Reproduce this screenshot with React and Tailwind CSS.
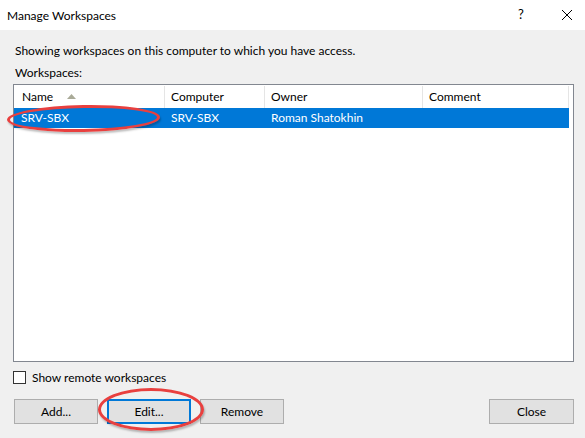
import React from "react";

export default function App() {
  const font = { fontFamily: 'Lato, "Noto Sans", sans-serif' };
  return (
    <div className="relative w-[585px] h-[438px] flex flex-col bg-[#f0f0f0] text-[12px] text-black overflow-hidden" style={font}>
      {/* title bar */}
      <div className="h-[30px] bg-white flex items-center pl-[7px] shrink-0">
        <span className="text-[12px] leading-none mt-[1px]">Manage Workspaces</span>
        <div className="flex-1" />
        <span className="w-[12px] text-center mr-[34px] text-[13px]">?</span>
        <svg width="12" height="12" viewBox="0 0 12 12" className="mr-[12px]">
          <path d="M1 1 L11 11 M11 1 L1 11" stroke="#000" strokeWidth="1" fill="none" />
        </svg>
      </div>

      {/* body */}
      <div className="flex-1 flex flex-col pl-[13px] pr-[11px] pt-[13px]">
        <div className="h-[16px] leading-[16px] pl-[2px]">Showing workspaces on this computer to which you have access.</div>
        <div className="h-[16px] leading-[16px] pl-[2px] mt-[6px]">Workspaces:</div>

        {/* list */}
        <div className="mt-[3px] h-[278px] border border-[#828790] bg-white pr-[4px]">
          <div className="flex h-[23px] pt-[1px]">
            <div className="w-[151px] border-r border-[#e5e5e5] flex items-center pl-[8px]">
              <span>Name</span>
              <svg width="9" height="5" viewBox="0 0 9 5" className="ml-[14px] mb-[1px]">
                <path d="M0 5 L4.5 0 L9 5 Z" fill="#a9aa98" />
              </svg>
            </div>
            <div className="w-[100px] border-r border-[#e5e5e5] flex items-center pl-[6px]">Computer</div>
            <div className="w-[158px] border-r border-[#e5e5e5] flex items-center pl-[6px]">Owner</div>
            <div className="w-[146px] border-r border-[#e5e5e5] flex items-center pl-[6px]">Comment</div>
          </div>
          <div className="flex h-[20px] bg-[#0078d7] text-white items-center">
            <div className="w-[151px] pl-[7px]">SRV-SBX</div>
            <div className="w-[100px] pl-[6px]">SRV-SBX</div>
            <div className="w-[158px] pl-[6px]">Roman Shatokhin</div>
            <div className="w-[146px]" />
          </div>
        </div>

        {/* checkbox */}
        <div className="flex items-center mt-[9px] h-[13px]">
          <div className="w-[13px] h-[13px] border border-[#333] bg-white" />
          <span className="ml-[6px] leading-none">Show remote workspaces</span>
        </div>

        {/* buttons */}
        <div className="flex mt-[15px] pl-[1px]">
          <div className="w-[84px] h-[25px] border border-[#adadad] bg-[#e1e1e1] flex items-center justify-center">Add...</div>
          <div className="ml-[9px] w-[84px] h-[25px] border-2 border-[#0078d7] bg-[#e1e1e1] flex items-center justify-center">Edit...</div>
          <div className="ml-[9px] w-[84px] h-[25px] border border-[#adadad] bg-[#e1e1e1] flex items-center justify-center">Remove</div>
          <div className="flex-1" />
          <div className="w-[85px] h-[25px] border border-[#adadad] bg-[#e1e1e1] flex items-center justify-center">Close</div>
        </div>
      </div>

      {/* red annotation ellipses */}
      <div className="absolute left-[7px] top-[105px] w-[153px] h-[27px] rounded-[50%] border-[3px] border-[#e8403f] shadow-[1px_2px_2px_rgba(0,0,0,0.25)] -rotate-[1deg]" />
      <div className="absolute left-[98px] top-[388px] w-[106px] h-[43px] rounded-[50%] border-[3px] border-[#e8403f] shadow-[1px_2px_2px_rgba(0,0,0,0.25)]" />
    </div>
  );
}
